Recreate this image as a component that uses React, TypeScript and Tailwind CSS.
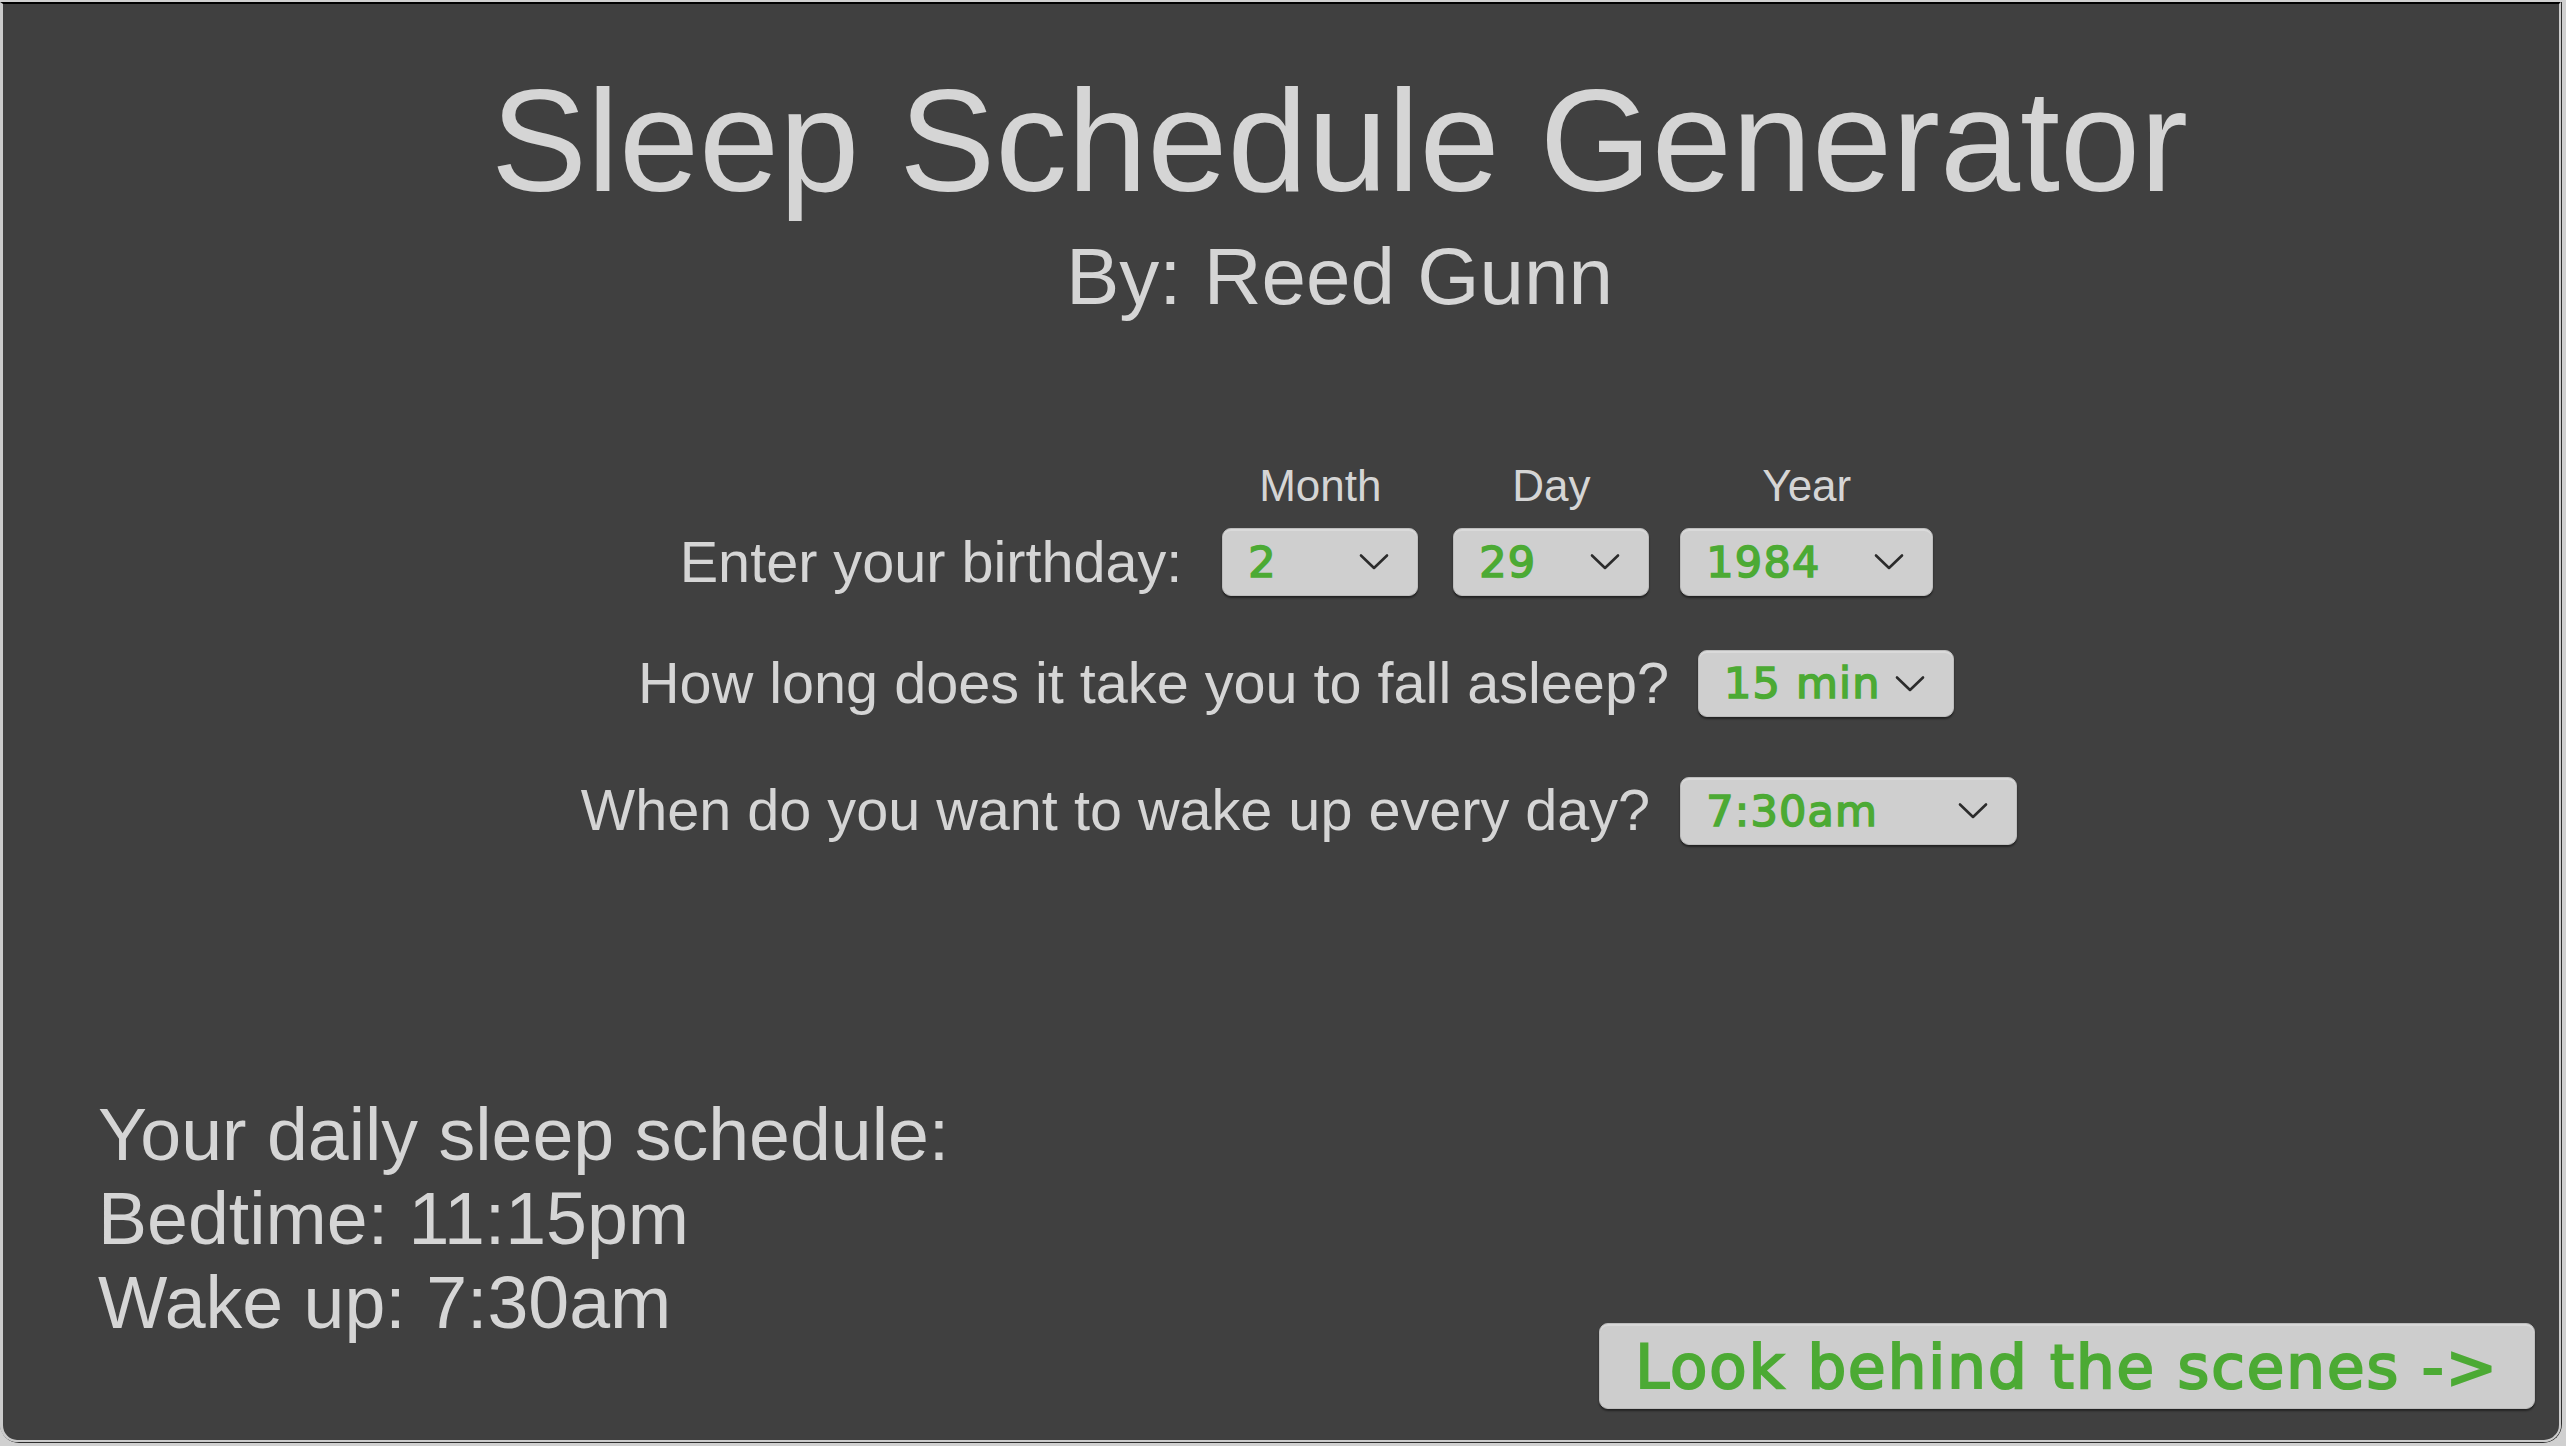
const sans = "font-['Liberation_Sans',Arial,sans-serif]";
const dv = "font-['DejaVu_Sans',Verdana,sans-serif]";

function Chevron() {
  return (
    <svg width="30" height="18" viewBox="0 0 30 18" fill="none" className="shrink-0">
      <path d="M2 2.5 L15 15 L28 2.5" stroke="#2b2b2b" strokeWidth="2.6" strokeLinecap="round" strokeLinejoin="round" />
    </svg>
  );
}

function Select({ value, width, height = "h-[68px]" }: { value: string; width: string; height?: string }) {
  return (
    <div
      className={`${width} ${height} ${dv} flex items-center justify-between pl-[25px] pr-[28px] rounded-[9px] bg-[#cfcfcf] border border-[#bdbdbd] shadow-[inset_0_2px_0_#dadada,0_2px_2px_rgba(0,0,0,0.45)] text-[43px] tracking-[1.2px] leading-none text-[#4caa34] [-webkit-text-stroke:1.6px_#4caa34]`}
    >
      <span>{value}</span>
      <Chevron />
    </div>
  );
}

function Field({ label, value, width, className = "" }: { label: string; value: string; width: string; className?: string }) {
  return (
    <div className={`flex flex-col items-center ${className}`}>
      <div className={`${sans} text-[44px] leading-[44px] mb-[20px]`}>{label}</div>
      <Select value={value} width={width} />
    </div>
  );
}

export default function App() {
  return (
    <div className="w-[2566px] h-[1446px] bg-[#d0d0d0] flex flex-col pt-[2px] pr-[4px] pb-[3px] overflow-hidden">
      <div className="flex-1 flex flex-col rounded-b-[19px] border-r border-b border-[#2e2e2e]">
        <div className="flex-1 flex flex-col rounded-b-[17px] border-t-2 border-l-[3px] border-r-2 border-b-2 border-t-black border-l-[#cbcbcb] border-r-[#cbcbcb] border-b-[#cbcbcb] bg-[#404040] text-[#d5d5d5]">
          {/* Header */}
          <div className={`${sans} flex flex-col items-center pt-[66px] pl-[117px]`}>
            <h1 className="text-[144px] leading-[144px]">Sleep Schedule Generator</h1>
            <p className="mt-[23px] text-[80px] leading-[80px]">By: Reed Gunn</p>
          </div>

          {/* Form */}
          <div className="mt-[147px] flex flex-col">
            <div className="flex items-end justify-center pl-[51px]">
              <div className={`${sans} h-[68px] flex items-center text-[57.6px] mr-[40px]`}>Enter your birthday:</div>
              <Field label="Month" value="2" width="w-[196px]" />
              <Field label="Day" value="29" width="w-[196px]" className="ml-[35px]" />
              <Field label="Year" value="1984" width="w-[253px]" className="ml-[31px]" />
            </div>

            <div className="mt-[54px] flex items-center justify-center pl-[30px]">
              <div className={`${sans} text-[57.6px] leading-none mr-[29px]`}>How long does it take you to fall asleep?</div>
              <Select value="15 min" width="w-[256px]" height="h-[67px]" />
            </div>

            <div className="mt-[60px] flex items-center justify-center pl-[36px]">
              <div className={`${sans} text-[57.6px] leading-none mr-[30px]`}>When do you want to wake up every day?</div>
              <Select value="7:30am" width="w-[337px]" />
            </div>
          </div>

          <div className="flex-1" />

          {/* Result + link */}
          <div className="flex items-end justify-between pl-[95px] pr-[24px] pb-[31px]">
            <div className={`${sans} text-[73.5px] leading-[84px] mb-[64px]`}>
              <p>Your daily sleep schedule:</p>
              <p>Bedtime: 11:15pm</p>
              <p>Wake up: 7:30am</p>
            </div>
            <button
              className={`${dv} w-[936px] h-[86px] flex items-center justify-center rounded-[9px] bg-[#cdcdcd] border border-[#bdbdbd] shadow-[inset_0_2px_0_#d8d8d8,0_2px_2px_rgba(0,0,0,0.45)] text-[61px] tracking-[2px] leading-none text-[#4caa34] [-webkit-text-stroke:2.2px_#4caa34]`}
            >
              Look behind the scenes -&gt;
            </button>
          </div>
        </div>
      </div>
    </div>
  );
}
